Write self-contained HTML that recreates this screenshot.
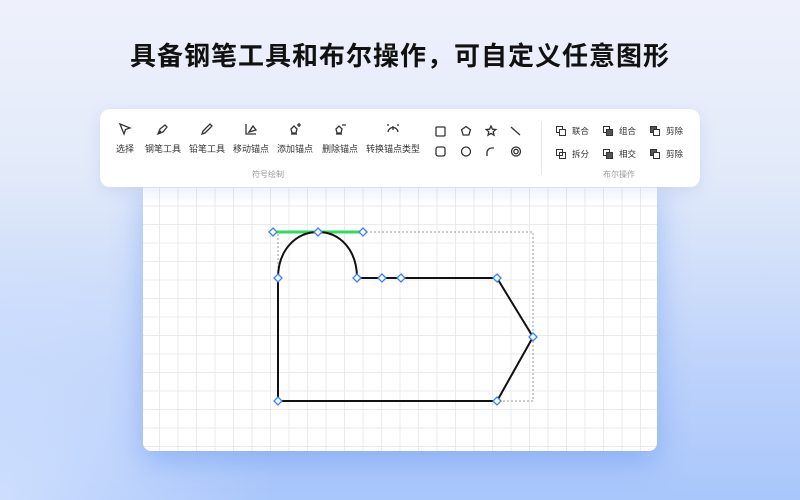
<!DOCTYPE html>
<html style="width:800px;height:500px;overflow:hidden;background:#a9c6fb"><head><meta charset="utf-8"><style>
*{margin:0;padding:0;box-sizing:border-box}
body{width:800px;height:500px;overflow:hidden;position:relative;font-family:"Liberation Sans","Noto Sans CJK SC",sans-serif;
background:linear-gradient(180deg,#eef1fb 0%,#e2eafa 35%,#bcd2fb 75%,#a9c6fb 100%);}
.glow{position:absolute;left:0;top:250px;width:300px;height:250px;background:radial-gradient(circle at 0% 100%,rgba(220,232,255,.7),rgba(220,232,255,0) 70%)}
h1{position:absolute;top:36px;left:0;width:800px;text-align:center;font-size:26px;font-weight:bold;color:#111;letter-spacing:1px;font-family:"Liberation Sans","Noto Sans CJK SC",sans-serif}
.canvas{position:absolute;left:143px;top:180px;width:514px;height:271px;border-radius:0 0 8px 8px;background-color:#fff;
background-image:linear-gradient(#e9ebee 1px,transparent 1px),linear-gradient(90deg,#e9ebee 1px,transparent 1px);
background-size:18.5px 18.5px;background-position:16px 7px;box-shadow:0 10px 30px rgba(90,140,240,.45)}
.tb{position:absolute;left:100px;top:109px;width:600px;height:78px;background:#fff;border-radius:10px;box-shadow:0 4px 16px rgba(120,150,220,.2)}
.it{position:absolute;top:12px;text-align:center;font-size:9px;color:#333;white-space:nowrap}
.it svg{display:block;margin:0 auto 5px;width:16px;height:16px}
.cap{position:absolute;top:60px;font-size:8px;color:#999}
.sep{position:absolute;left:441px;top:12px;width:1px;height:54px;background:#e6e6e6}
.bo{position:absolute;font-size:8.5px;color:#333;display:flex;align-items:center;gap:6px}
.sq{width:10px;height:10px;position:relative}
.sq i{position:absolute;width:7px;height:7px;border:1.3px solid #333}
</style></head><body>
<div class="glow"></div>
<h1>具备钢笔工具和布尔操作，可自定义任意图形</h1>
<div class="canvas"></div>
<svg style="position:absolute;left:0;top:0" width="800" height="500">
<rect x="278" y="232" width="255" height="169" fill="none" stroke="#999" stroke-width="1" stroke-dasharray="2,2"/>
<line x1="273" y1="232" x2="363" y2="232" stroke="#2edc5c" stroke-width="3"/>
<path d="M278,401 L278,278 C278,250 296,232 318,232 C340,232 357,250 357,278 L497,278 L533,337 L497,401 Z" fill="none" stroke="#111" stroke-width="2"/>
<g fill="#fff" stroke="#3b82f0" stroke-width="1.3">
<path d="M273,228l4,4l-4,4l-4,-4z"/><path d="M318,228l4,4l-4,4l-4,-4z"/><path d="M363,228l4,4l-4,4l-4,-4z"/>
<path d="M278,274l4,4l-4,4l-4,-4z"/><path d="M357,274l4,4l-4,4l-4,-4z"/><path d="M382,274l4,4l-4,4l-4,-4z"/><path d="M401,274l4,4l-4,4l-4,-4z"/><path d="M497,274l4,4l-4,4l-4,-4z"/>
<path d="M533,333l4,4l-4,4l-4,-4z"/><path d="M278,397l4,4l-4,4l-4,-4z"/><path d="M497,397l4,4l-4,4l-4,-4z"/>
</g></svg>
<div class="tb">
<div class="it" style="left:16px"><svg viewBox="0 0 16 16" fill="none" stroke="#333" stroke-width="1.3"><path d="M3 3l10 4l-4.5 1.5L7 13z"/></svg>选择</div>
<div class="it" style="left:45px"><svg viewBox="0 0 16 16" fill="none" stroke="#333" stroke-width="1.3"><path d="M3 13l2-5l5-4l2 2l-4 5z M3 13l3-3"/></svg>钢笔工具</div>
<div class="it" style="left:89px"><svg viewBox="0 0 16 16" fill="none" stroke="#333" stroke-width="1.3"><path d="M3 13l1-3l7-7l2 2l-7 7z"/></svg>铅笔工具</div>
<div class="it" style="left:133px"><svg viewBox="0 0 16 16" fill="none" stroke="#333" stroke-width="1.3"><path d="M3 3v10h10 M6 11l4-6l3 4z"/></svg>移动锚点</div>
<div class="it" style="left:177px"><svg viewBox="0 0 16 16" fill="none" stroke="#333" stroke-width="1.3"><path d="M4 13h6 M5 12l-1-4l3-3l3 3l-1 4z M12 2v4 M10 4h4"/></svg>添加锚点</div>
<div class="it" style="left:222px"><svg viewBox="0 0 16 16" fill="none" stroke="#333" stroke-width="1.3"><path d="M4 13h6 M5 12l-1-4l3-3l3 3l-1 4z M10 4h4"/></svg>删除锚点</div>
<div class="it" style="left:266px"><svg viewBox="0 0 16 16" fill="none" stroke="#333" stroke-width="1.3"><path d="M3 11c1-6 9-6 10 0 M8 5v4 M2 4h2 M12 4h2"/></svg>转换锚点类型</div>
<svg style="position:absolute;left:334px;top:16px" width="90" height="40" viewBox="0 0 90 40" fill="none" stroke="#333" stroke-width="1.3">
<rect x="2" y="2" width="9" height="9" rx="1"/>
<path d="M32 1.5l4.5 3.2l-1.7 5.3h-5.6l-1.7-5.3z"/>
<path d="M57 1l1.4 3.2l3.4.3l-2.6 2.3l.8 3.4l-3-1.8l-3 1.8l.8-3.4l-2.6-2.3l3.4-.3z"/>
<path d="M77 2l9 8"/>
<rect x="2" y="22" width="9" height="9" rx="2"/>
<circle cx="32" cy="26.5" r="4.5"/>
<path d="M53 31v-3c0-3 2-5 5-5h2"/>
<circle cx="82" cy="26.5" r="4.5"/><circle cx="82" cy="26.5" r="2.2"/>
</svg>
<div class="sep"></div>
<div class="bo" style="left:456px;top:16px"><div class="sq"><i style="left:0;top:0"></i><i style="left:3px;top:3px;background:#fff"></i></div>联合</div>
<div class="bo" style="left:503px;top:16px"><div class="sq"><i style="left:0;top:0"></i><i style="left:3px;top:3px;background:#555"></i></div>组合</div>
<div class="bo" style="left:550px;top:16px"><div class="sq"><i style="left:0;top:0;background:#555"></i><i style="left:3px;top:3px;background:#fff"></i></div>剪除</div>
<div class="bo" style="left:456px;top:39px"><div class="sq"><i style="left:0;top:0"></i><i style="left:3px;top:3px"></i></div>拆分</div>
<div class="bo" style="left:503px;top:39px"><div class="sq"><i style="left:0;top:0"></i><i style="left:3px;top:3px;background:#555"></i></div>相交</div>
<div class="bo" style="left:550px;top:39px"><div class="sq"><i style="left:0;top:0;background:#555"></i><i style="left:3px;top:3px;background:#fff"></i></div>剪除</div>
<div class="cap" style="left:152px">符号绘制</div>
<div class="cap" style="left:503px">布尔操作</div>
</div>
</body></html>
